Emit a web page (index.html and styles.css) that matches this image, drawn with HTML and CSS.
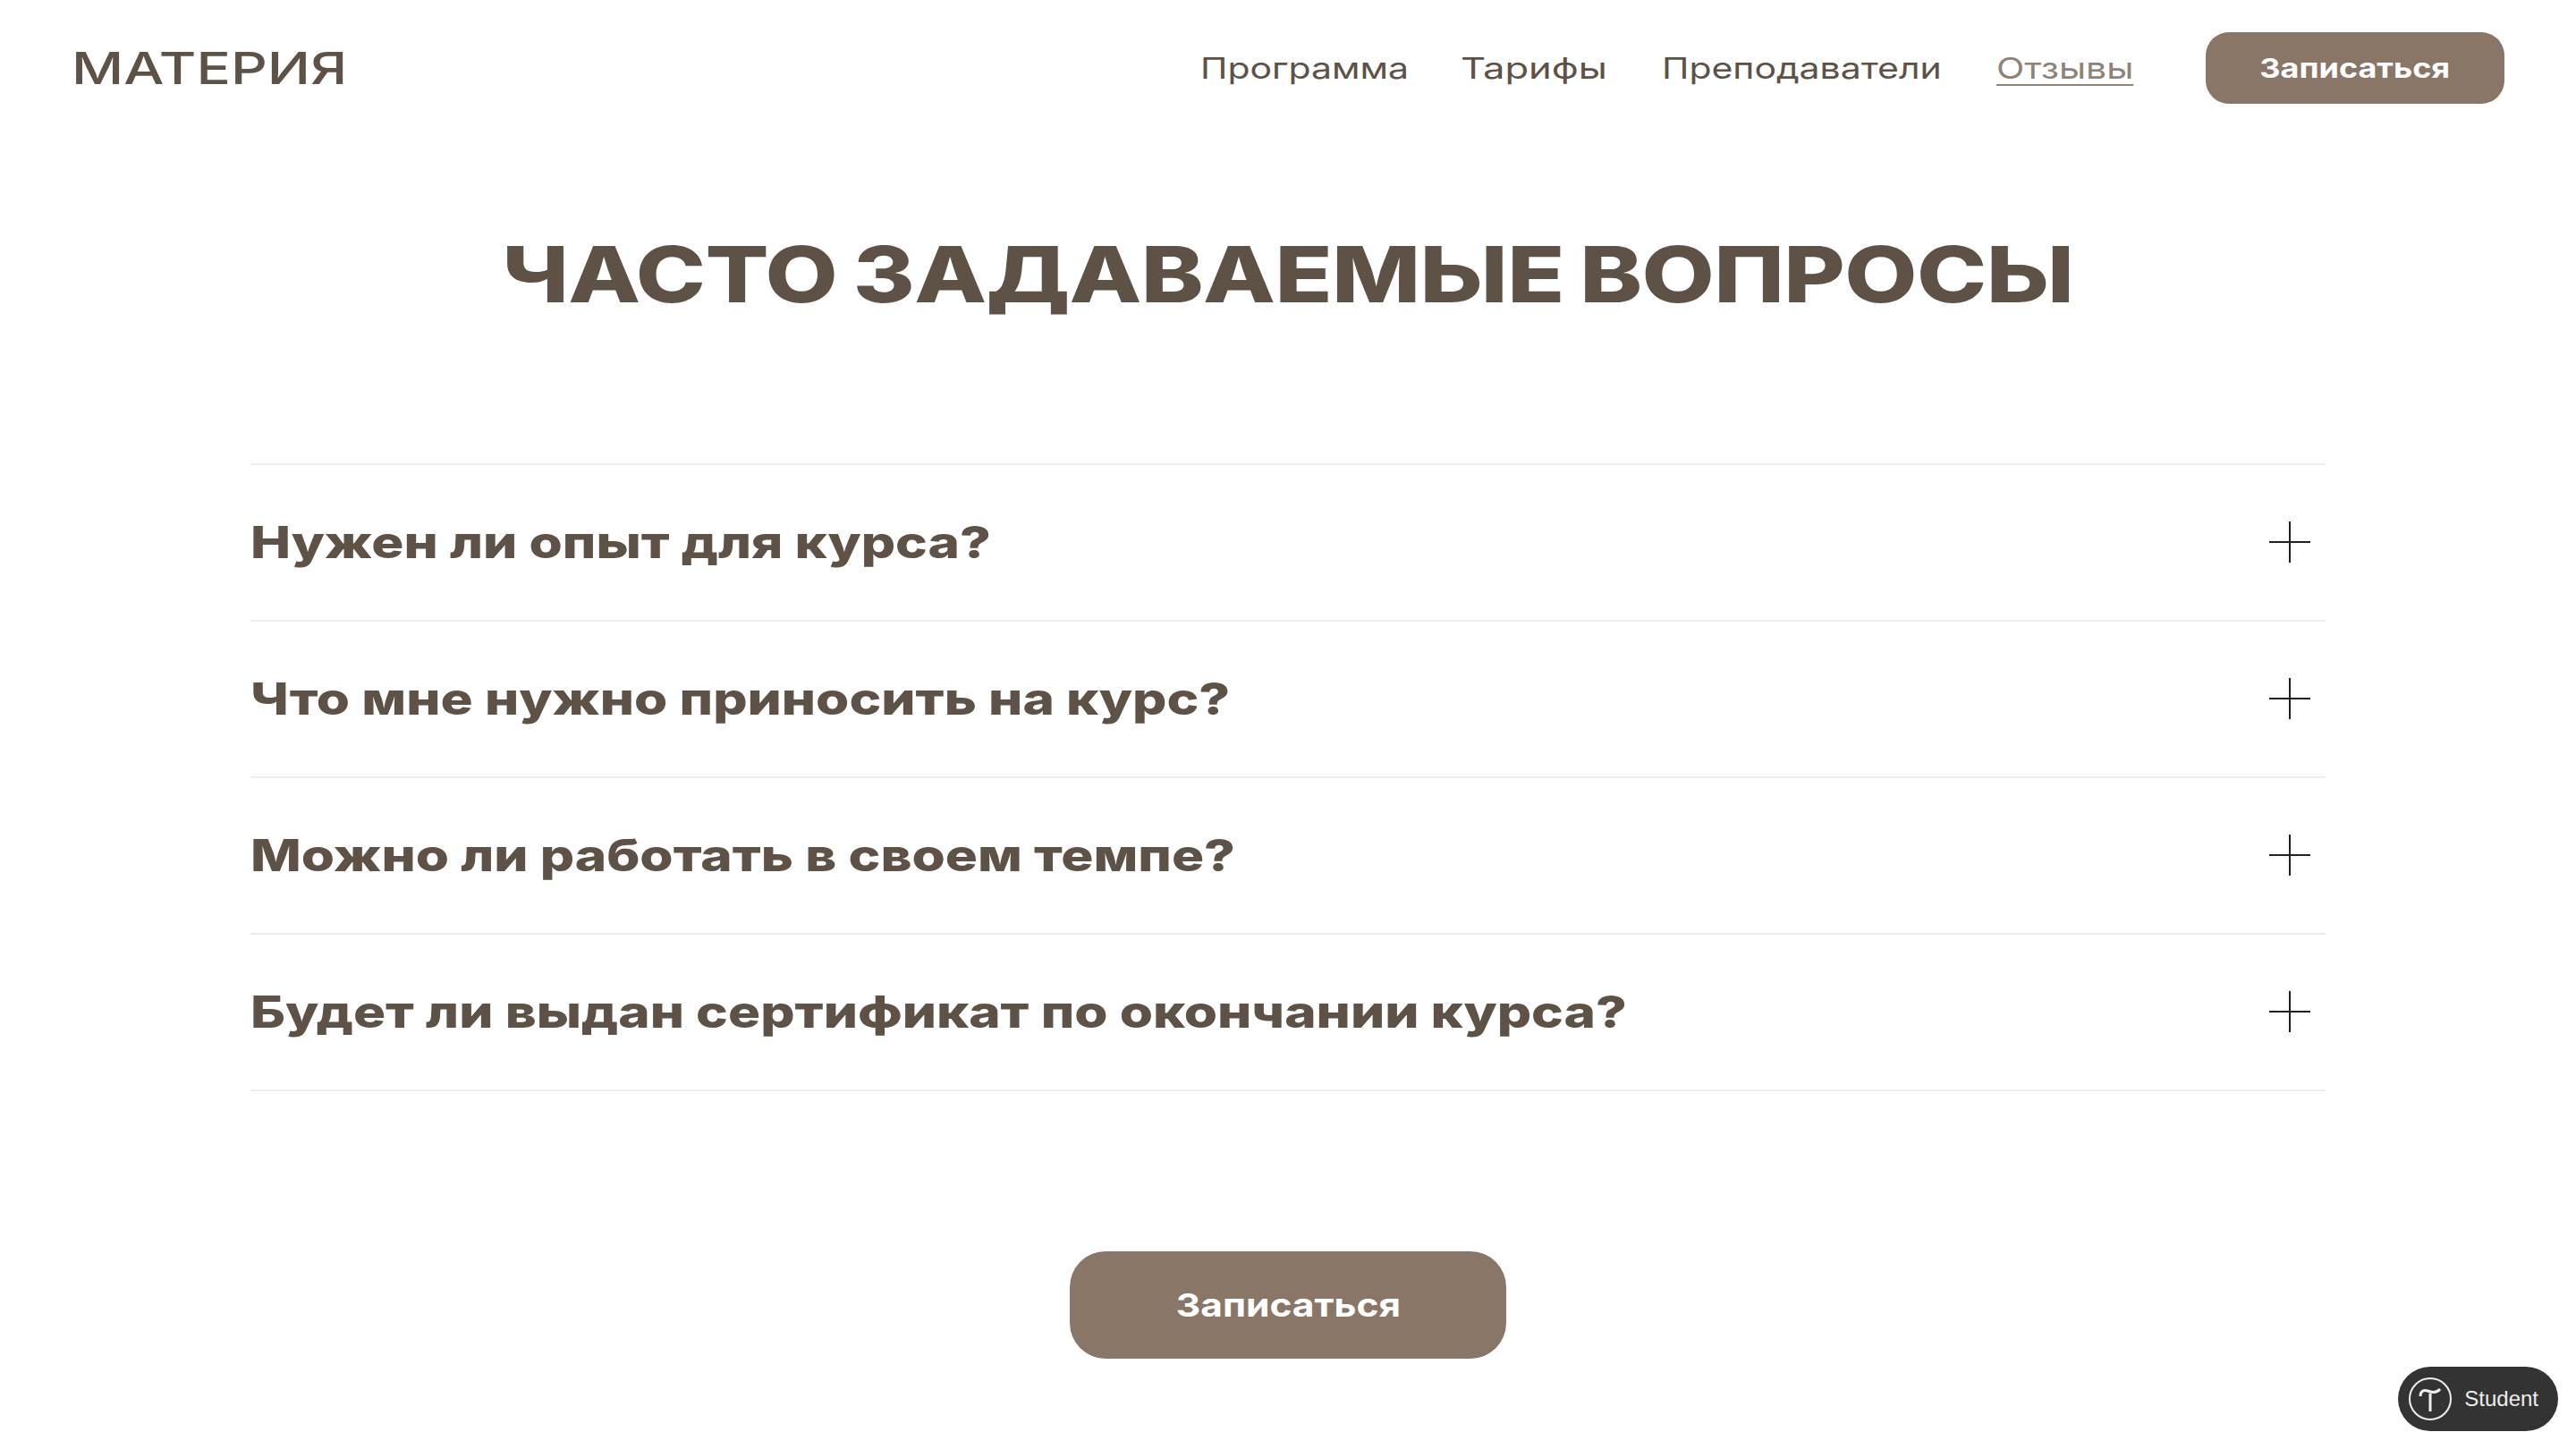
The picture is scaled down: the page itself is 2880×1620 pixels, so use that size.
FILE: index.html
```html
<!DOCTYPE html>
<html lang="ru">
<head>
    <meta charset="UTF-8">
    <meta name="viewport" content="width=device-width, initial-scale=1.0">
    <title>Материя</title>
    <link rel="stylesheet" href="styles.css">
</head>
<body>
    <header class="header">
        <a class="logo" href="#"><span class="wide">МАТЕРИЯ</span></a>
        <nav class="nav">
            <a class="nav-link link-program" href="#"><span class="wide">Программа</span></a>
            <a class="nav-link link-prices" href="#"><span class="wide">Тарифы</span></a>
            <a class="nav-link link-teachers" href="#"><span class="wide">Преподаватели</span></a>
            <a class="nav-link link-reviews active" href="#"><span class="wide">Отзывы</span></a>
            <a class="btn btn-small" href="#"><span class="wide">Записаться</span></a>
        </nav>
    </header>

    <main>
        <h1 class="title"><span class="wide">ЧАСТО ЗАДАВАЕМЫЕ ВОПРОСЫ</span></h1>

        <div class="faq">
            <div class="faq-item">
                <span class="wide">Нужен ли опыт для курса?</span>
                <svg class="plus" viewBox="0 0 46 46"><path d="M0 23H46M23 0V46"/></svg>
            </div>
            <div class="faq-item">
                <span class="wide">Что мне нужно приносить на курс?</span>
                <svg class="plus" viewBox="0 0 46 46"><path d="M0 23H46M23 0V46"/></svg>
            </div>
            <div class="faq-item">
                <span class="wide">Можно ли работать в своем темпе?</span>
                <svg class="plus" viewBox="0 0 46 46"><path d="M0 23H46M23 0V46"/></svg>
            </div>
            <div class="faq-item">
                <span class="wide">Будет ли выдан сертификат по окончании курса?</span>
                <svg class="plus" viewBox="0 0 46 46"><path d="M0 23H46M23 0V46"/></svg>
            </div>
        </div>

        <div class="cta">
            <a class="btn btn-big" href="#"><span class="wide">Записаться</span></a>
        </div>
    </main>

    <!-- Tilda plan badge -->
    <a class="badge" href="#">
        <svg class="badge-logo" viewBox="0 0 48 48">
            <circle cx="24" cy="24" r="23"/>
            <path d="M13 21C13 15 17 13.500 21 15C25 16.500 31 18 35 13"/>
            <path d="M24 18V38"/>
        </svg>
        <span>Student</span>
    </a>
</body>
</html>
```

FILE: styles.css
```css
body {
    font-family: 'Inter', 'Liberation Sans', sans-serif;
    background-color: #fff;
    color: #5e5146;
    margin: 0;
    padding: 0;
}
a {
    color: inherit;
    text-decoration: none;
}
/* No wide grotesk is installed, so the text is stretched */
.wide {
    display: inline-block;
    white-space: nowrap;
    transform: scaleX(1.24);
    transform-origin: left center;
}
.header {
    display: flex;
    justify-content: space-between;
    align-items: center;
    padding: 36px 80px 0 80px;
}
.logo {
    font-size: 50px;
    font-weight: 500;
    line-height: 80px;
}
.logo .wide {
    transform: scaleX(1.275);
}
.nav {
    display: flex;
    align-items: center;
    font-size: 33px;
}
.nav-link {
    display: block;
    margin-right: 60px;
}
.link-program { width: 231px; }
.link-prices { width: 165px; }
.link-teachers { width: 314px; }
.link-reviews { width: 152px; margin-right: 82px; }
.link-prices .wide {
    transform: scaleX(1.32);
}
.active {
    color: #8f8379;
}
.active .wide {
    text-decoration: underline;
    text-decoration-thickness: 2px;
    text-underline-offset: 6px;
}
.btn {
    display: flex;
    justify-content: center;
    align-items: center;
    background-color: #8a7667;
    color: #fff;
    font-weight: 700;
}
.btn .wide {
    transform: scaleX(1.2);
    transform-origin: center;
}
.btn-small {
    width: 334px;
    height: 80px;
    border-radius: 26px;
    font-size: 30px;
}
.btn-big {
    width: 488px;
    height: 120px;
    border-radius: 40px;
    font-size: 36px;
}
.btn-big .wide {
    transform: scaleX(1.18);
}
.title {
    margin: 140px 0 161px;
    font-size: 87px;
    font-weight: 800;
    line-height: 101px;
    text-align: center;
    letter-spacing: -0.5px;
    word-spacing: -4px;
}
.title .wide {
    transform: scaleX(1.209);
    transform-origin: center;
}
.faq {
    width: 2320px;
    margin: 0 auto;
    border-top: 2px solid #eeeeee;
}
.faq-item {
    display: flex;
    justify-content: space-between;
    align-items: center;
    height: 173px;
    padding-right: 17px;
    border-bottom: 2px solid #eeeeee;
    font-size: 50px;
    font-weight: 800;
}
.faq-item .wide {
    transform: scaleX(1.205);
    margin-top: -2px;
}
.plus {
    width: 46px;
    height: 46px;
    margin-top: -1px;
    fill: none;
    stroke: #222;
    stroke-width: 2;
}
.cta {
    display: flex;
    justify-content: center;
    margin-top: 179px;
}
.badge {
    position: fixed;
    right: 20px;
    bottom: 20px;
    display: flex;
    align-items: center;
    gap: 14px;
    height: 72px;
    padding: 0 22px 0 12px;
    border-radius: 36px;
    background-color: #333;
    color: #eee;
    font-family: 'Liberation Sans', Arial, sans-serif;
    font-size: 24px;
}
.badge-logo {
    width: 48px;
    height: 48px;
    fill: none;
    stroke: #eee;
    stroke-width: 2;
}
.badge-logo path {
    stroke-width: 3;
}
```
